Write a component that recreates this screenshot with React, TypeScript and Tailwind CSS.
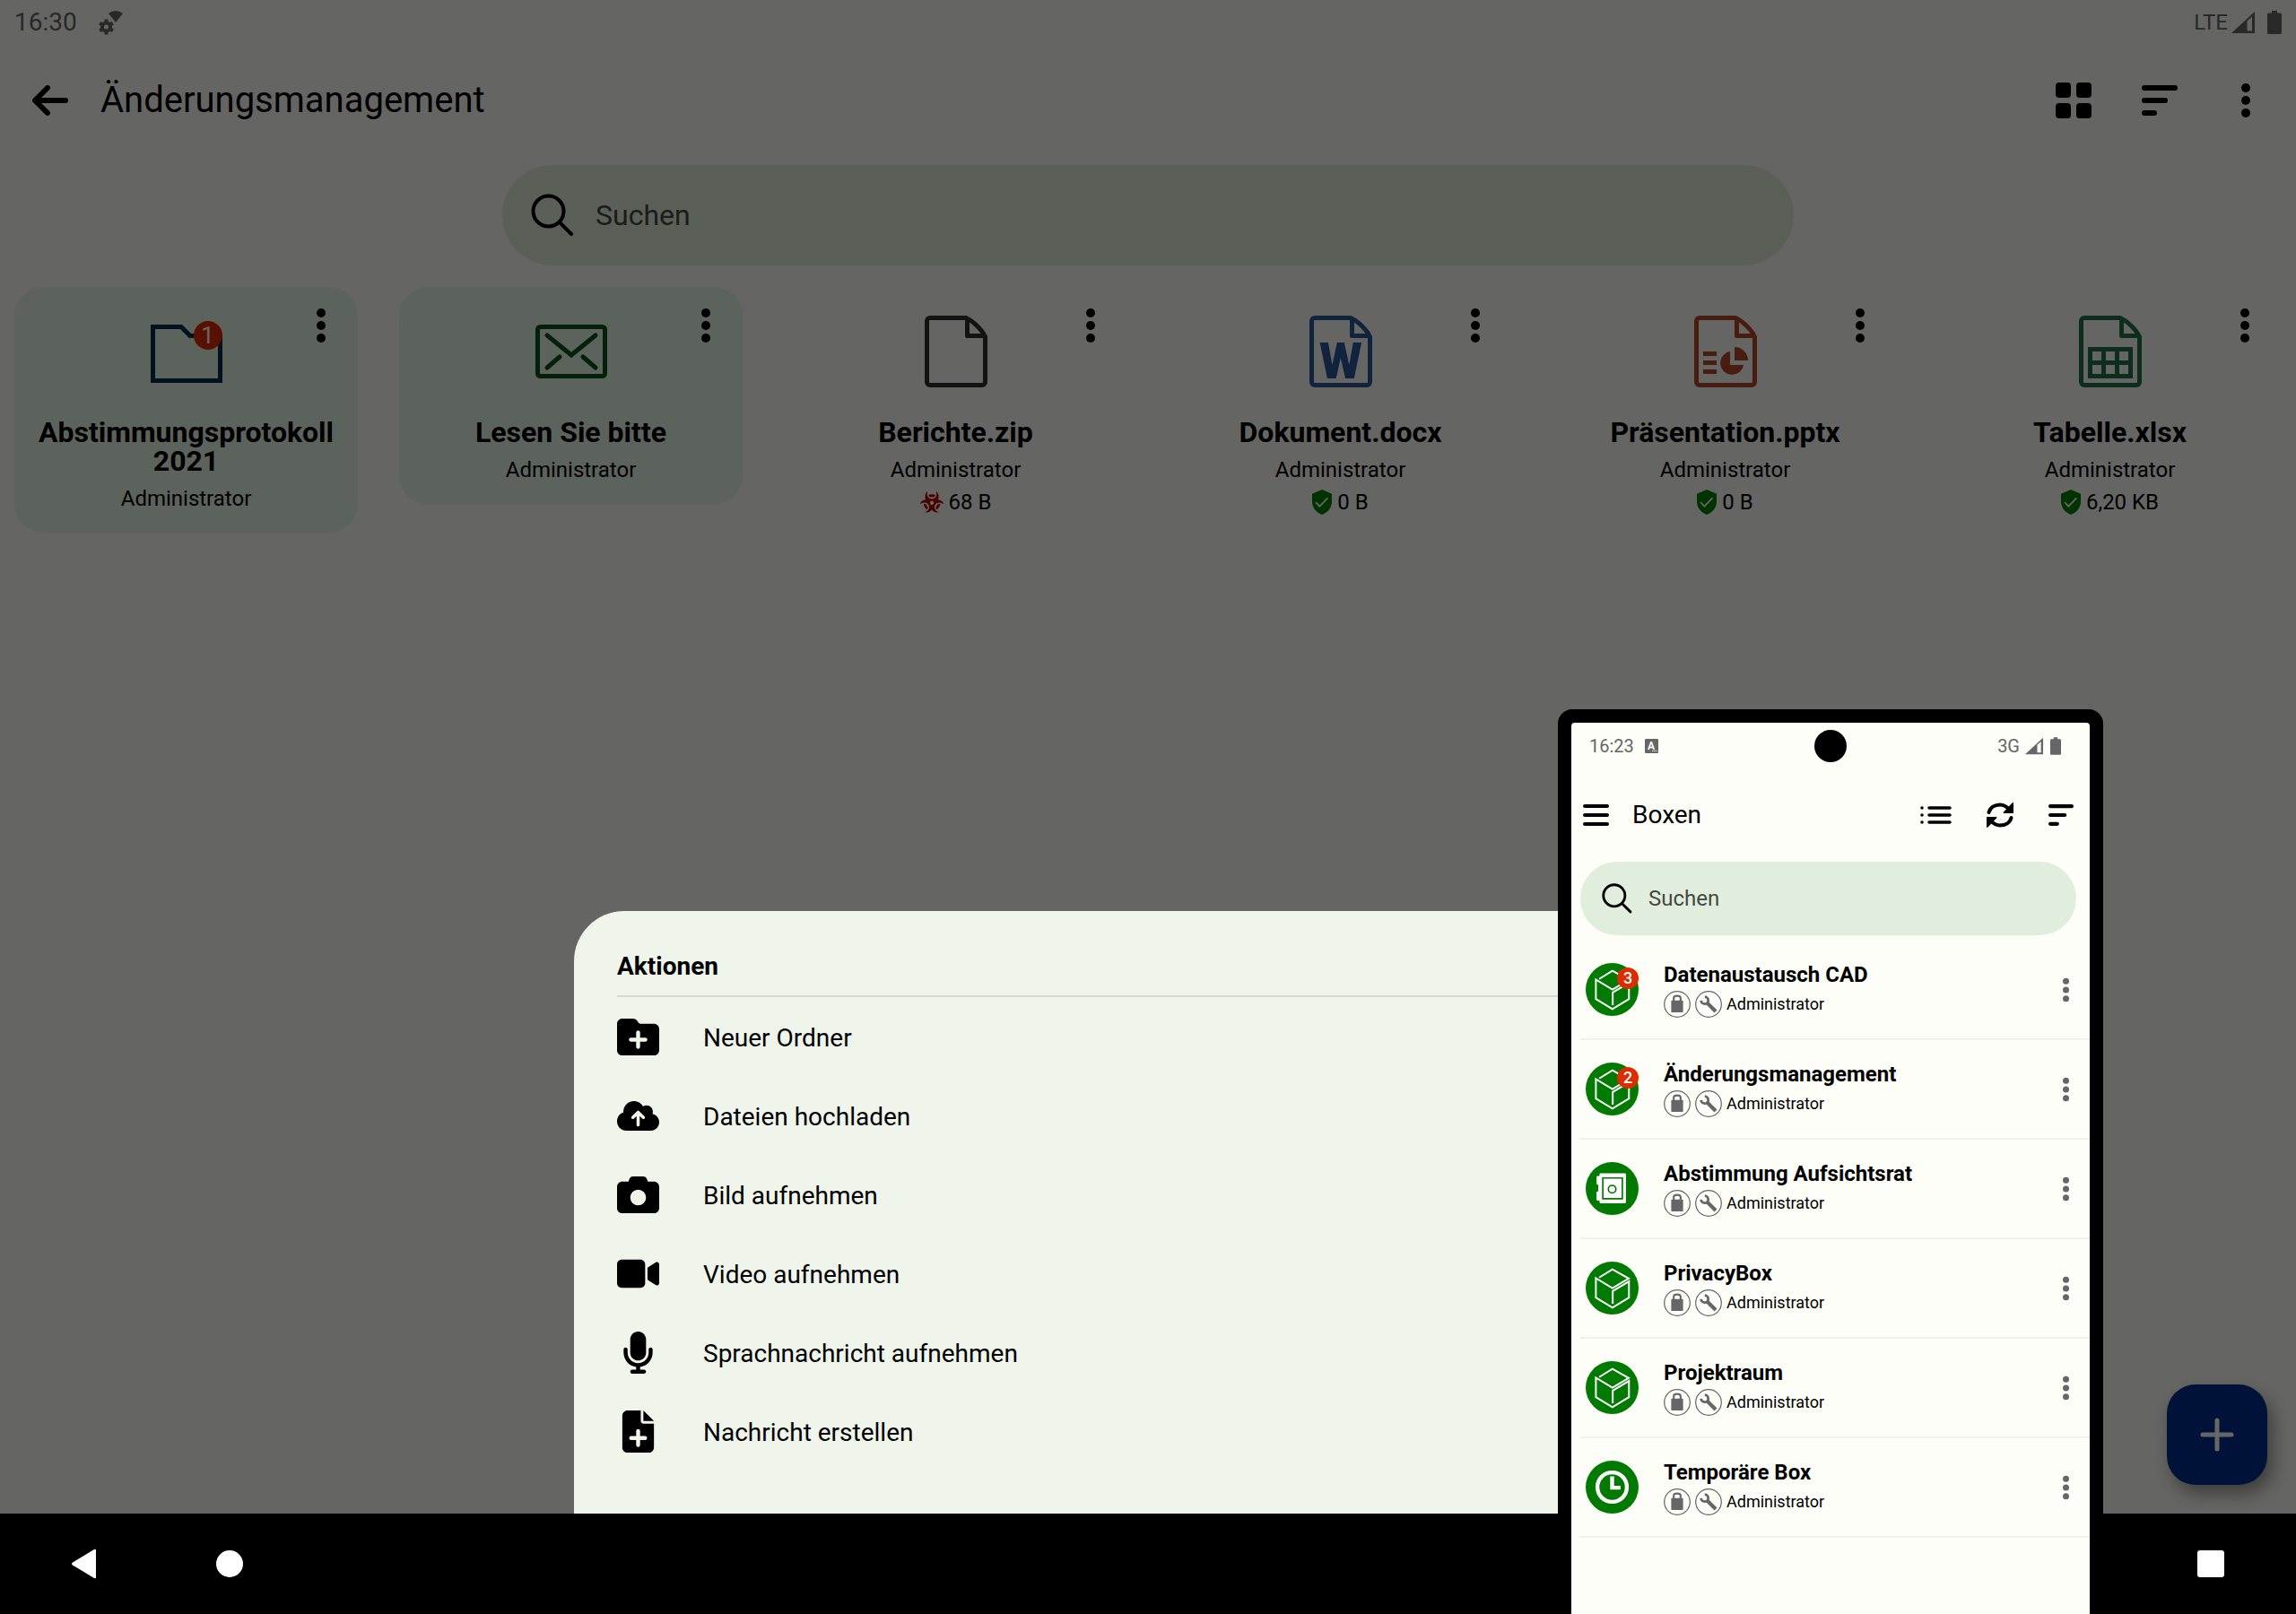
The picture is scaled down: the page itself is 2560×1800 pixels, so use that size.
import { useId, useState, type ReactNode } from 'react';
import { clsx } from 'clsx';
import {
  FaBiohazard,
  FaCamera,
  FaCloudArrowUp,
  FaFolderPlus,
  FaMicrophone,
  FaVideo,
} from 'react-icons/fa6';

type ScanState = 'clean' | 'infected';

interface Entry {
  title: string;
  owner: string;
  icon: ReactNode;
  unread?: number;
  highlighted?: boolean;
  size?: string;
  scan?: ScanState;
}

interface Box {
  title: string;
  owner: string;
  kind: 'cube' | 'safe' | 'clock';
  unread?: number;
}

const entries: Entry[] = [
  { title: 'Abstimmungsprotokoll 2021', owner: 'Administrator', icon: <FolderIcon />, unread: 1, highlighted: true },
  { title: 'Lesen Sie bitte', owner: 'Administrator', icon: <EnvelopeIcon />, highlighted: true },
  { title: 'Berichte.zip', owner: 'Administrator', icon: <FileIcon className="text-[#303030]" />, size: '68 B', scan: 'infected' },
  {
    title: 'Dokument.docx',
    owner: 'Administrator',
    icon: (
      <FileIcon className="text-[#2b579a]">
        <text x="35" y="70" textAnchor="middle" fontSize="55" fontWeight="900" fill="currentColor">W</text>
      </FileIcon>
    ),
    size: '0 B',
    scan: 'clean',
  },
  {
    title: 'Präsentation.pptx',
    owner: 'Administrator',
    icon: (
      <FileIcon className="text-[#b7472a]">
        <path
          d="M10 40h15v5H10zM10 50h15v5H10zM10 60h15v5H10zM40 40v15h15A13 13 0 1 1 40 40zM45 35a15 15 0 0 1 15 15H45z"
          fill="currentColor"
        />
      </FileIcon>
    ),
    size: '0 B',
    scan: 'clean',
  },
  {
    title: 'Tabelle.xlsx',
    owner: 'Administrator',
    icon: (
      <FileIcon className="text-[#217346]">
        <path
          d="M10 35h50v35H10zM15 40v10h10V40zM30 40v10h10V40zM45 40v10h10V40zM15 55v10h10V55zM30 55v10h10V55zM45 55v10h10V55z"
          fill="currentColor"
          fillRule="evenodd"
        />
      </FileIcon>
    ),
    size: '6,20 KB',
    scan: 'clean',
  },
];

const actions = [
  { label: 'Neuer Ordner', icon: <FaFolderPlus className="size-[47px]" /> },
  { label: 'Dateien hochladen', icon: <FaCloudArrowUp className="size-[47px]" /> },
  { label: 'Bild aufnehmen', icon: <FaCamera className="size-[47px]" /> },
  { label: 'Video aufnehmen', icon: <FaVideo className="size-[47px]" /> },
  { label: 'Sprachnachricht aufnehmen', icon: <FaMicrophone className="size-[47px]" /> },
  { label: 'Nachricht erstellen', icon: <FilePlusIcon /> },
];

const boxes: Box[] = [
  { title: 'Datenaustausch CAD', owner: 'Administrator', kind: 'cube', unread: 3 },
  { title: 'Änderungsmanagement', owner: 'Administrator', kind: 'cube', unread: 2 },
  { title: 'Abstimmung Aufsichtsrat', owner: 'Administrator', kind: 'safe' },
  { title: 'PrivacyBox', owner: 'Administrator', kind: 'cube' },
  { title: 'Projektraum', owner: 'Administrator', kind: 'cube' },
  { title: 'Temporäre Box', owner: 'Administrator', kind: 'clock' },
];

export default function App() {
  return (
    <div className="relative flex min-h-screen flex-col overflow-hidden bg-[#fdfef8] font-['Roboto',sans-serif] text-black">
      <TabletScreen />
      <NavigationBar />
      <Phone />
    </div>
  );
}

function TabletScreen() {
  return (
    <div className="relative flex flex-1 flex-col">
      {/* Status bar */}
      <div className="flex h-[50px] items-center justify-between px-4 text-[#666]">
        <div className="flex items-center gap-6">
          <span className="text-[28px] leading-8">16:30</span>
          <GearSignalIcon />
        </div>
        <div className="flex items-center">
          <span className="text-2xl leading-8">LTE</span>
          <SignalIcon className="ml-1 h-6 w-[26px]" />
          <BatteryIcon className="ml-[14px] h-[26px] w-4" />
        </div>
      </div>

      {/* App bar */}
      <header className="flex h-[122px] items-center px-9 pt-[2px]">
        <button aria-label="Zurück" className="mr-9">
          <svg viewBox="0 0 40 34" className="h-[34px] w-10" fill="none" stroke="currentColor" strokeWidth="6" strokeLinecap="round" strokeLinejoin="round">
            <path d="M17 3 3 17l14 14M4 17h33" />
          </svg>
        </button>
        <h1 className="flex-1 text-[40px] leading-[48px]">Änderungsmanagement</h1>
        <div className="flex items-center gap-14">
          <button aria-label="Kachelansicht">
            <svg viewBox="0 0 40 40" className="size-10" fill="currentColor">
              <rect width="17" height="17" rx="4" />
              <rect x="23" width="17" height="17" rx="4" />
              <rect y="23" width="17" height="17" rx="4" />
              <rect x="23" y="23" width="17" height="17" rx="4" />
            </svg>
          </button>
          <button aria-label="Sortieren">
            <SortIcon className="h-[34px] w-10" />
          </button>
          <button aria-label="Mehr" className="flex w-10 justify-center">
            <DotsIcon className="h-[38px] w-[10px]" />
          </button>
        </div>
      </header>

      <SearchField
        className="mx-auto mt-3 h-28 w-[1440px] max-w-full gap-6 rounded-full px-8 text-[32px]"
        iconClassName="size-12"
      />

      {/* Content grid */}
      <main className="mt-6 grid grid-cols-6 items-start gap-[46px] px-4">
        {entries.map((entry) => (
          <EntryCard key={entry.title} entry={entry} />
        ))}
      </main>

      <button
        aria-label="Hinzufügen"
        className="absolute bottom-8 right-8 flex size-28 items-center justify-center rounded-[32px] bg-[#002e8c] text-white shadow-[6px_10px_20px_rgba(0,0,0,0.4)]"
      >
        <svg viewBox="0 0 38 38" className="size-[38px]" stroke="currentColor" strokeWidth="5" strokeLinecap="round">
          <path d="M19 3v32M3 19h32" />
        </svg>
      </button>

      {/* Scrim */}
      <div className="absolute inset-0 bg-black/60" />
      <ActionSheet />
    </div>
  );
}

function EntryCard({ entry }: { entry: Entry }) {
  return (
    <article
      className={clsx(
        'relative flex flex-col items-center rounded-[32px] px-4 pb-6 pt-8 text-center',
        entry.highlighted && 'bg-[#e5f7e5]',
      )}
    >
      <div className="relative flex h-20 items-center justify-center">
        {entry.icon}
        {entry.unread && (
          <span className="absolute right-0 top-[6px] size-8 rounded-full bg-[#dd2c00] text-center text-[26px] leading-8 text-white">
            {entry.unread}
          </span>
        )}
      </div>
      <h2 className="mt-[34px] text-[32px] font-bold leading-8">{entry.title}</h2>
      <p className="mt-3 text-2xl leading-7">{entry.owner}</p>
      {entry.size && (
        <p className="mt-2 flex items-center gap-[6px] text-2xl leading-7">
          {entry.scan === 'clean' ? <ShieldIcon /> : <FaBiohazard className="size-[26px] text-[#b40000]" />}
          {entry.size}
        </p>
      )}
      <button aria-label={`Optionen für ${entry.title}`} className="absolute right-9 top-6">
        <DotsIcon className="h-[38px] w-[10px]" />
      </button>
    </article>
  );
}

function ActionSheet() {
  return (
    <section className="absolute bottom-0 left-1/4 w-1/2 rounded-t-[56px] bg-[#eff5ea] px-12 pb-12 pt-[46px]">
      <h2 className="border-b-2 border-[#d7d9d5] pb-4 text-[28px] font-bold leading-8">Aktionen</h2>
      {actions.map((action) => (
        <button key={action.label} className="flex h-[88px] w-full items-center gap-[49px] text-left text-[28px] leading-8">
          {action.icon}
          <span className="pt-[3px]">{action.label}</span>
        </button>
      ))}
    </section>
  );
}

function NavigationBar() {
  return (
    <nav className="flex h-28 items-center justify-between bg-black px-20 text-white">
      <div className="flex items-center gap-[131px]">
        <button aria-label="Zurück">
          <svg viewBox="0 0 30 34" className="h-[34px] w-[30px]" fill="currentColor">
            <path d="M27 2v30q0 2-2 1L1 18.500q-2-1.500 0-3L25 1q2-1 2 1z" />
          </svg>
        </button>
        <button aria-label="Startbildschirm" className="size-[30px] rounded-full bg-white" />
      </div>
      <button aria-label="Letzte Apps" className="size-[30px] rounded-[3px] bg-white" />
    </nav>
  );
}

function Phone() {
  return (
    <div className="absolute bottom-0 right-[215px] w-[608px] rounded-t-2xl bg-black px-[15px] pt-[15px]">
      <div className="rounded-t-sm bg-[#fdfef8] pb-[85px]">
        <div className="relative flex h-[51px] items-center justify-between pl-5 pr-8 text-[#666]">
          <div className="flex items-center gap-3">
            <span className="text-[20px] leading-6">16:23</span>
            <svg viewBox="0 0 16 16" className="size-4">
              <rect width="15" height="16" rx="1" fill="currentColor" />
              <text x="7" y="12" textAnchor="middle" fontSize="12" fontWeight="700" fill="#fdfef8">A</text>
              <path d="M8 13.500h6" stroke="#fdfef8" strokeDasharray="1.500 0.800" />
            </svg>
          </div>
          <div className="absolute left-1/2 top-2 size-9 -translate-x-1/2 rounded-full bg-black" />
          <div className="flex items-center">
            <span className="text-[20px] leading-6">3G</span>
            <SignalIcon className="ml-[6px] h-5 w-5" />
            <BatteryIcon className="ml-2 h-5 w-3" />
          </div>
        </div>

        <header className="flex h-[104px] items-center pl-[13px] pr-[18px]">
          <button aria-label="Menü" className="mr-[26px]">
            <svg viewBox="0 0 29 28" className="h-7 w-[29px]" stroke="currentColor" strokeWidth="4" strokeLinecap="round">
              <path d="M2 4h25M2 14h25M2 24h25" />
            </svg>
          </button>
          <h1 className="flex-1 text-[28px] leading-8">Boxen</h1>
          <div className="flex items-center gap-[38px]">
            <button aria-label="Listenansicht">
              <svg viewBox="0 0 35 20" className="h-5 w-[35px]" stroke="currentColor" strokeWidth="3.500" strokeLinecap="round">
                <path d="M10 2h23M10 10h23M10 18h23M2 2h.01M2 10h.01M2 18h.01" />
              </svg>
            </button>
            <button aria-label="Aktualisieren">
              <svg viewBox="0 0 32 30" className="h-[30px] w-8">
                <g id="arc">
                  <path d="M3.500 12C5 6.500 10 3.500 16 3.500c5 0 8 2.500 11 6" fill="none" stroke="currentColor" strokeWidth="4" strokeLinecap="round" />
                  <path d="M31 2v11H20q-1-.5 0-1.500L29.500 1.500q1.500-1 1.500.5z" fill="currentColor" />
                </g>
                <use href="#arc" transform="rotate(180 16 15)" />
              </svg>
            </button>
            <button aria-label="Sortieren">
              <SortIcon className="h-6 w-[28px]" />
            </button>
          </div>
        </header>

        <SearchField
          className="ml-[10px] mr-[15px] h-[82px] gap-[18px] rounded-full px-6 text-2xl"
          iconClassName="size-[34px]"
        />

        <ul className="ml-[10px] mt-[6px]">
          {boxes.map((box) => (
            <BoxRow key={box.title} box={box} />
          ))}
        </ul>
      </div>
    </div>
  );
}

function BoxRow({ box }: { box: Box }) {
  return (
    <li className="flex h-[111px] items-center border-b-2 border-[#f0f1ec] pl-[6px] pr-[23px]">
      <div className="relative mr-7">
        <BoxIcon kind={box.kind} />
        {box.unread && (
          <span className="absolute right-0 top-[5px] size-6 rounded-full bg-[#dd2c00] text-center text-[18px] font-medium leading-6 text-white">
            {box.unread}
          </span>
        )}
      </div>
      <div className="flex-1">
        <h2 className="text-2xl font-bold leading-7">{box.title}</h2>
        <div className="mt-1 flex items-center gap-[5px] text-[18px] leading-6">
          <LockBadge />
          <WrenchBadge />
          <span>{box.owner}</span>
        </div>
      </div>
      <button aria-label={`Optionen für ${box.title}`} className="text-[#666]">
        <DotsIcon className="h-7 w-[7px]" />
      </button>
    </li>
  );
}

function SearchField({ className, iconClassName }: { className: string; iconClassName: string }) {
  const id = useId();
  const [query, setQuery] = useState('');

  return (
    <div className={clsx('flex items-center bg-[#e2eedd]', className)}>
      <label htmlFor={id} aria-label="Suchen">
        <svg viewBox="0 0 48 48" className={iconClassName} fill="none" stroke="currentColor" strokeWidth="4" strokeLinecap="round">
          <circle cx="19.500" cy="19.500" r="17" />
          <path d="m32 32 13 13" />
        </svg>
      </label>
      <input
        id={id}
        type="text"
        value={query}
        onChange={(e) => setQuery(e.target.value)}
        placeholder="Suchen"
        className="h-full min-w-0 flex-1 bg-transparent outline-none placeholder:text-[#424940]"
      />
    </div>
  );
}

function DotsIcon({ className }: { className: string }) {
  return (
    <svg viewBox="0 0 10 38" className={className} fill="currentColor">
      <circle cx="5" cy="5" r="5" />
      <circle cx="5" cy="19" r="5" />
      <circle cx="5" cy="33" r="5" />
    </svg>
  );
}

function SortIcon({ className }: { className: string }) {
  return (
    <svg viewBox="0 0 40 34" className={className} stroke="currentColor" strokeWidth="6" strokeLinecap="round">
      <path d="M3 3h34M3 17h23M3 31h11" />
    </svg>
  );
}

function SignalIcon({ className }: { className: string }) {
  return (
    <svg viewBox="0 0 26 24" className={className} fill="currentColor" fillRule="evenodd">
      <path d="M0 24 26 0v24zM17.500 10.500V21.500h5.500V5.500z" />
    </svg>
  );
}

function BatteryIcon({ className }: { className: string }) {
  return (
    <svg viewBox="0 0 16 26" className={className} fill="currentColor">
      <path d="M5 0h6v2.500h3.500A1.500 1.500 0 0 1 16 4v20.500a1.500 1.500 0 0 1-1.500 1.500h-13A1.500 1.500 0 0 1 0 24.500V4a1.500 1.500 0 0 1 1.500-1.500H5z" />
    </svg>
  );
}

function GearSignalIcon() {
  return (
    <svg viewBox="0 0 28 27" className="h-[27px] w-7" fill="none" stroke="currentColor">
      <path d="M11 3q8-6 16 0l-8 10z" fill="currentColor" stroke="none" />
      <circle cx="8.500" cy="18" r="4.500" strokeWidth="4" />
      <path d="M8.500 9.500v4M8.500 22.500v4M1.200 13.700l3.400 2M12.400 20.300l3.400 2M1.200 22.300l3.400-2M12.400 15.700l3.400-2" strokeWidth="4" />
    </svg>
  );
}

function FolderIcon() {
  return (
    <svg viewBox="0 0 80 80" className="size-20" fill="none" stroke="#002d4b" strokeWidth="5">
      <path d="M2.500 12.500H34l10 10h33.500v50h-75z" />
    </svg>
  );
}

function EnvelopeIcon() {
  return (
    <svg viewBox="0 0 80 80" className="size-20" fill="none" stroke="#08531b" strokeWidth="5" strokeLinecap="round">
      <rect x="2.500" y="12.500" width="75" height="55" rx="3" />
      <path d="m13 22 27 22 27-22M13 58l14-12M67 58 53 46" />
    </svg>
  );
}

function FileIcon({ className, children }: { className: string; children?: ReactNode }) {
  return (
    <svg viewBox="0 0 70 80" className={clsx('h-20 w-[70px] overflow-visible', className)}>
      <path
        d="M46 2.500H6A3.500 3.500 0 0 0 2.500 6v68A3.500 3.500 0 0 0 6 77.500h58a3.500 3.500 0 0 0 3.500-3.500V23.500C64 16 54 6 46 2.500zM47.500 4v18.500H67"
        fill="none"
        stroke="currentColor"
        strokeWidth="5"
        strokeLinejoin="round"
      />
      {children}
    </svg>
  );
}

function ShieldIcon() {
  return (
    <svg viewBox="0 0 66 84" className="h-7 w-[22px]">
      <path d="M33 0 66 14v26c0 22-15 37-33 44C15 77 0 62 0 40V14z" fill="#008000" />
      <path d="m12 42 13 14 27-28" fill="none" stroke="white" strokeWidth="5" />
    </svg>
  );
}

function FilePlusIcon() {
  return (
    <svg viewBox="0 0 384 512" className="size-[47px]" fill="currentColor">
      <path d="M0 64C0 28.700 28.700 0 64 0h160v128c0 17.700 14.300 32 32 32h128v288c0 35.300-28.700 64-64 64H64c-35.300 0-64-28.700-64-64zm384 64H256V0z" />
      <path d="M192 250v170M107 335h170" stroke="#eff5ea" strokeWidth="48" strokeLinecap="round" />
    </svg>
  );
}

function BoxIcon({ kind }: { kind: Box['kind'] }) {
  return (
    <svg viewBox="0 0 176 176" className="size-[59px]" fill="none">
      <circle cx="88" cy="88" r="88" fill="#007a00" />
      {kind === 'cube' && (
        <path
          d="m45 53 44-27 54 30-54 32-55-33v65l55 33 55-33V66L90 98v42"
          stroke="white"
          strokeWidth="6"
        />
      )}
      {kind === 'safe' && (
        <>
          <path d="M50 37h80q4 0 4 4v92q0 4-4 4H50q-4 0-4-4v-5h-6q-4 0-4-4v-22q0-4 4-4h2V75h-2q-4 0-4-4V50q0-4 4-4h6v-5q0-4 4-4z" fill="white" />
          <path d="M57 53h65v69H57z" stroke="#007a00" strokeWidth="5" />
          <circle cx="88" cy="90" r="12.500" stroke="#007a00" strokeWidth="5" />
        </>
      )}
      {kind === 'clock' && (
        <>
          <circle cx="88" cy="88" r="49" stroke="white" strokeWidth="13" />
          <path d="M88 52v38h28" stroke="white" strokeWidth="13" />
        </>
      )}
    </svg>
  );
}

function LockBadge() {
  return (
    <svg viewBox="0 0 86 86" className="size-[30px]" fill="none" stroke="#666">
      <circle cx="43" cy="43" r="41" strokeWidth="3.500" />
      <rect x="24" y="31" width="38" height="38" rx="2" fill="#666" stroke="none" />
      <path d="M32 33V23q0-7 11-7t11 7v10" strokeWidth="6" />
    </svg>
  );
}

function WrenchBadge() {
  return (
    <svg viewBox="0 0 86 86" className="size-[30px]" fill="none" stroke="#666">
      <circle cx="43" cy="43" r="41" strokeWidth="3.500" />
      <path d="M31 19A11.500 11.500 0 1 1 19 31" strokeWidth="8" />
      <path d="m40 40 26 26" strokeWidth="12" />
    </svg>
  );
}
